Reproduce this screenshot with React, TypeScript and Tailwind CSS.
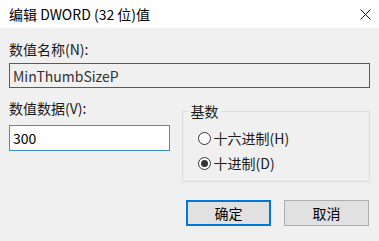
import React from 'react';

const font = 'font-["Noto_Sans_CJK_SC","Noto_Sans",sans-serif]';

// --- RadioOption ---
interface RadioOptionProps {
    label: string;
    checked?: boolean;
}
const RadioOption: React.FC<RadioOptionProps> = ({ label, checked }) => (
    <div className="flex items-center h-[20px]">
        <span className="w-[13px] h-[13px] rounded-full border border-[#333333] bg-white flex items-center justify-center">
            {checked && <span className="w-[7px] h-[7px] rounded-full bg-[#333333]" />}
        </span>
        <span className="ml-[3px] text-[14px] leading-[20px] text-[#1a1a1a]">{label}</span>
    </div>
);

const App: React.FC = () => {
    return (
        <div className={`w-[379px] h-[241px] bg-[#f0f0f0] flex flex-col overflow-hidden ${font}`}>
            {/* title bar */}
            <div className="h-[28px] bg-white flex items-center justify-between pl-[9px] pr-[7px] shrink-0">
                <span className="text-[14px] leading-[20px] text-black">编辑 DWORD (32 位)值</span>
                <svg width="11" height="11" viewBox="0 0 11 11" className="mr-[1px]">
                    <path d="M0.5 0.5 L10.5 10.5 M10.5 0.5 L0.5 10.5" stroke="#111" strokeWidth="1" />
                </svg>
            </div>

            <div className="flex flex-col px-[9px] pt-[11px]">
                <p className="text-[14px] leading-[20px] text-[#1a1a1a]">数值名称(N):</p>
                <div className="mt-[4px] h-[25px] border border-[#5a5a5a] bg-[#f0f0f0] flex items-center px-[3px]">
                    <span className="text-[14px] leading-[20px] text-[#333333]">MinThumbSizeP</span>
                </div>

                <div className="mt-[10px] flex gap-[12px]">
                    <div className="w-[161px] flex flex-col">
                        <p className="text-[14px] leading-[20px] text-[#1a1a1a]">数值数据(V):</p>
                        <div className="mt-[7px] h-[26px] border border-[#3d8ed4] bg-white flex items-center px-[3px]">
                            <span className="text-[14px] leading-[20px] text-black">300</span>
                        </div>
                    </div>
                    <fieldset className="w-[189px] mt-[3px] border border-[#dcdcdc] pb-[8px]">
                        <legend className="ml-[6px] px-[2px] text-[14px] leading-[20px] text-[#1a1a1a]">基数</legend>
                        <div className="mt-[7px] pl-[15px] flex flex-col gap-[5px]">
                            <RadioOption label="十六进制(H)" />
                            <RadioOption label="十进制(D)" checked />
                        </div>
                    </fieldset>
                </div>

                <div className="mt-[18px] flex justify-end gap-[13px] pr-[1px]">
                    <button className="w-[85px] h-[26px] border-2 border-[#0078d7] bg-[#e1e1e1] text-[14px] leading-[20px] text-black">确定</button>
                    <button className="w-[85px] h-[26px] border border-[#adadad] bg-[#e1e1e1] text-[14px] leading-[20px] text-black">取消</button>
                </div>
            </div>
        </div>
    );
};

export default App;
